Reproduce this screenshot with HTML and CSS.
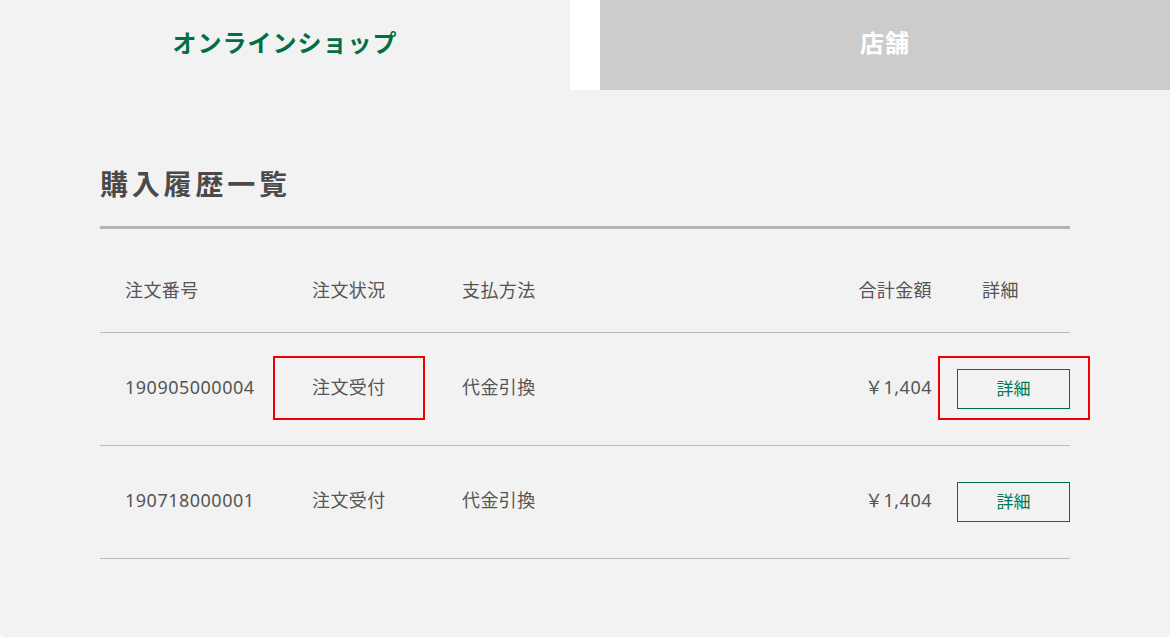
FILE: index.html
```html
<!DOCTYPE html>
<html lang="ja">
<head>
    <meta charset="UTF-8">
    <meta name="viewport" content="width=device-width, initial-scale=1.0">
    <title>購入履歴一覧</title>
    <link rel="stylesheet" href="styles.css">
</head>
<body>
    <div class="page">
        <nav class="tabs">
            <a class="tab tab-online">オンラインショップ</a>
            <a class="tab tab-store">店舗</a>
        </nav>

        <main class="panel">
            <h1 class="title">購入履歴一覧</h1>

            <div class="history">
                <div class="row row-head">
                    <div class="cell">注文番号</div>
                    <div class="cell">注文状況</div>
                    <div class="cell">支払方法</div>
                    <div class="cell cell-total">合計金額</div>
                    <div class="cell">詳細</div>
                </div>

                <div class="row">
                    <div class="cell num">190905000004</div>
                    <div class="cell cell-status">注文受付<span class="mark"></span></div>
                    <div class="cell">代金引換</div>
                    <div class="cell cell-total num">￥1,404</div>
                    <div class="cell cell-btn"><button class="detail-btn">詳細</button><span class="mark mark-btn"></span></div>
                </div>

                <div class="row">
                    <div class="cell num">190718000001</div>
                    <div class="cell cell-status">注文受付</div>
                    <div class="cell">代金引換</div>
                    <div class="cell cell-total num">￥1,404</div>
                    <div class="cell cell-btn"><button class="detail-btn">詳細</button></div>
                </div>
            </div>
        </main>
    </div>
</body>
</html>
```

FILE: styles.css
```css
:root {
    --panel-bg: #f2f2f2;
    --tab-off: #cccccc;
    --text-color: #555555;
    --green: #006f46;
    --rule: #bbbbbb;
}

body {
    margin: 0;
    background-color: #fff;
    color: var(--text-color);
    font-family: "Noto Sans", "Noto Sans CJK JP", sans-serif;
}

.page {
    width: 1170px;
}

.tabs {
    display: grid;
    grid-template-columns: 570px 1fr;
    column-gap: 30px;
    height: 90px;
}

.tab {
    display: flex;
    align-items: center;
    justify-content: center;
    padding-bottom: 8px;
    font-family: "Noto Sans CJK JP", sans-serif;
    font-size: 24px;
    font-weight: bold;
    letter-spacing: 1px;
}

.tab-online {
    background-color: var(--panel-bg);
    color: var(--green);
}

.tab-store {
    background-color: var(--tab-off);
    color: #fff;
}

.panel {
    height: 547px;
    box-sizing: border-box;
    padding: 72px 100px 0;
    background-color: var(--panel-bg);
    border-radius: 0 0 4px 4px;
}

.title {
    margin: 0 0 22px;
    font-family: "Noto Sans CJK JP", sans-serif;
    font-size: 28px;
    line-height: 42px;
    font-weight: bold;
    letter-spacing: 3.8px;
    color: #4a4a4a;
}

.history {
    border-top: 3px solid #b3b3b3;
}

.row {
    display: grid;
    grid-template-columns: 187px 150px 1fr 150px 113px;
    height: 112px;
    border-bottom: 1px solid var(--rule);
    font-size: 18px;
    line-height: 27px;
}

.row-head {
    height: auto;
    padding: 48px 0 28px;
}

.cell {
    position: relative;
    display: flex;
    align-items: center;
    padding-left: 25px;
    padding-bottom: 3px;
    letter-spacing: 0.4px;
}

.row-head .cell {
    padding-bottom: 0;
}

.num {
    letter-spacing: 0.5px;
}

.cell-total {
    justify-content: flex-end;
    padding-left: 0;
    padding-right: 25px;
}

.cell-btn {
    padding-left: 0;
    padding-bottom: 0;
}

.row-head .cell:last-child {
    padding-left: 25px;
}

.detail-btn {
    width: 113px;
    height: 40px;
    padding: 0 0 3px;
    border: 1px solid var(--green);
    background: transparent;
    color: #007a50;
    font-family: "Noto Sans CJK JP", sans-serif;
    font-size: 17px;
    cursor: pointer;
}

/* red annotation frames */
.mark {
    position: absolute;
    top: 23px;
    left: -14px;
    width: 152px;
    height: 64px;
    box-sizing: border-box;
    border: 2px solid #ee0000;
}

.mark-btn {
    left: -19px;
}
```
